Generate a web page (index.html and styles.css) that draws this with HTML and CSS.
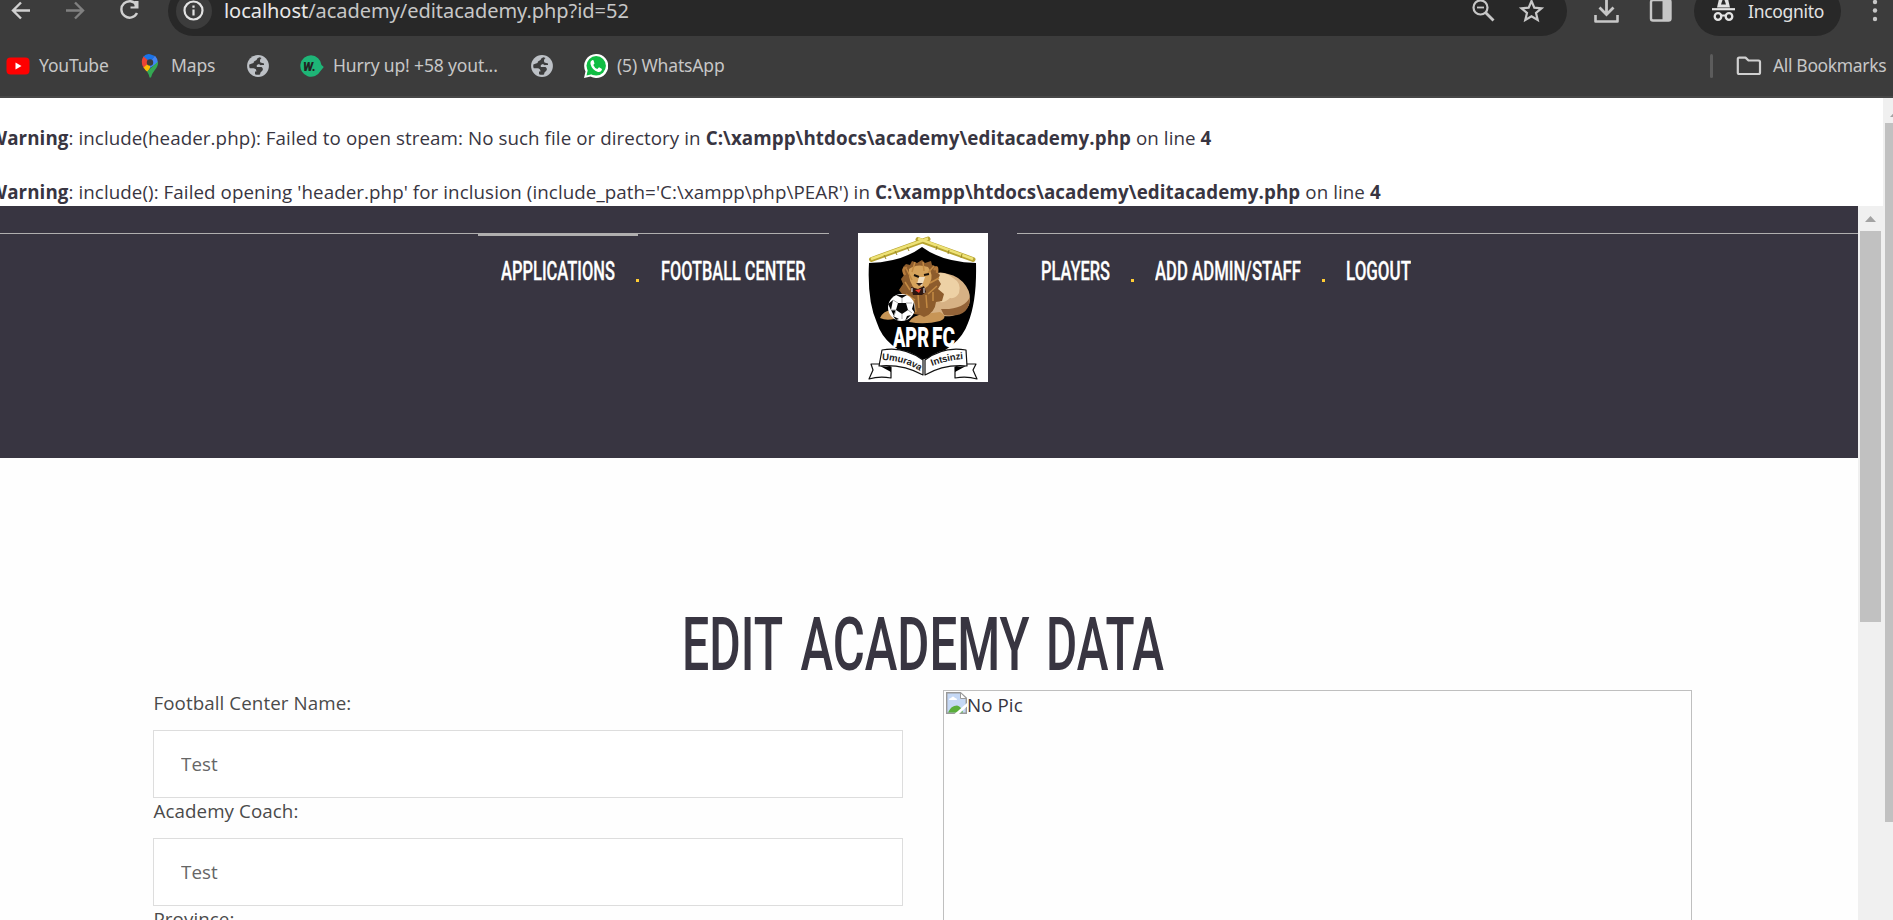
FILE: index.html
```
<!DOCTYPE html>
<html lang="en">
<head>
<meta charset="utf-8">
<title>Edit Academy</title>
<link rel="stylesheet" href="styles.css">
</head>
<body>
<div class="browser">
  <div class="toolbar">
    <svg class="nav-icons" width="168" height="50" viewBox="0 -14 168 50" fill="none" stroke-width="2.4">
      <path d="M30 10.500H13M21 2.500L13 10.500L21 18.500" stroke="#d0d0d0"/>
      <path d="M66 10.500H83M75 2.500L83 10.500L75 18.500" stroke="#808080"/>
      <path d="M136.500 5A8.200 8.200 0 1 0 137 13" stroke="#d0d0d0"/>
      <path d="M138.500 1V8.500H130.500V6.500H134.500V1Z" fill="#d0d0d0"/>
    </svg>
    <div class="address">
      <svg class="info" width="36" height="36" viewBox="0 0 36 36">
        <circle cx="18" cy="18" r="18" fill="#3c3c3c"/>
        <circle cx="17.500" cy="17.500" r="9" fill="none" stroke="#e3e3e3" stroke-width="2.200"/>
        <path d="M16.400 12.500h2.200v2.200h-2.200zM16.400 16.500h2.200v6h-2.200z" fill="#e3e3e3"/>
      </svg>
      <span class="url"><b>localhost</b>/academy/editacademy.php?id=52</span>
      <svg class="addr-icons" width="76" height="50" viewBox="1470 -14 76 50" fill="none" stroke="#c7c7c7">
        <circle cx="1480.500" cy="7.500" r="7" stroke-width="2.200"/>
        <path d="M1485.500 12.500L1493.500 20.500" stroke-width="2.800"/>
        <path d="M1477 7.500H1484" stroke-width="1.800"/>
        <path d="M1531.500 1L1534.300 7.700L1541.500 8.300L1536 13L1537.700 20L1531.500 16.200L1525.300 20L1527 13L1521.500 8.300L1528.700 7.700Z" stroke-width="2.200"/>
      </svg>
    </div>
    <svg class="action-icons" width="127" height="50" viewBox="1567 -14 127 50" fill="none" stroke="#c7c7c7">
      <path d="M1606.500 -4V14M1599.500 7.500L1606.500 14.500L1613.500 7.500" stroke-width="2.800"/>
      <path d="M1595.500 15V21.500H1617.500V15" stroke-width="2.600" stroke-linejoin="round"/>
      <rect x="1651" y="0" width="19.500" height="20.500" rx="2" stroke-width="2.400"/>
      <path d="M1663 0H1670V20H1663Z" fill="#c7c7c7"/>
    </svg>
    <div class="incognito">
      <svg width="24" height="50" viewBox="1712 -14 24 50" fill="none" stroke="#e3e3e3">
        <path d="M1712 9.200H1735" stroke-width="2.200"/>
        <path d="M1717 7.500L1719 -1H1728L1730 7.500Z" fill="#e3e3e3" stroke="none"/>
        <path d="M1721 4.500L1722.500 0H1724.500L1726 4.500Z" fill="#282828" stroke="none"/>
        <circle cx="1718" cy="16.500" r="3.300" stroke-width="2.300"/>
        <circle cx="1729" cy="16.500" r="3.300" stroke-width="2.300"/>
        <path d="M1721 15.500H1726" stroke-width="2"/>
      </svg>
      <span class="incognito-label">Incognito</span>
    </div>
    <svg class="menu" width="8" height="50" viewBox="0 -14 8 50" fill="#c7c7c7">
      <circle cx="4" cy="2" r="2.200"/><circle cx="4" cy="10.500" r="2.200"/><circle cx="4" cy="19" r="2.200"/>
    </svg>
  </div>

  <div class="bookmarks">
    <svg class="bm-youtube" width="24" height="24" viewBox="0 0 24 24">
      <rect x="0.500" y="3.500" width="23" height="17" rx="4" fill="#f00"/><path d="M9.500 8.500V15.500L15.500 12Z" fill="#fff"/>
    </svg>
    <span class="t-youtube">YouTube</span>
    <svg class="bm-maps" width="18" height="24" viewBox="0 0 18 24">
      <path d="M2 3Q5 -0.500 9 0.200L14 2L9 8Z" fill="#1a73e8"/>
      <path d="M9 8L14 1.800Q17 5 17 9L9 14Z" fill="#4285f4"/>
      <path d="M2.500 2.500L9 8L3 14.500Q0.500 11 0.800 7.500Q1 4.500 2.500 2.500Z" fill="#ea4335"/>
      <path d="M9 8V14L6.500 18Q4 16 2.500 13.500Z" fill="#fbbc04"/>
      <path d="M17 7.500Q17.500 12 13.500 16.500Q11 19.500 10 23.500H8.500Q8 20.500 6 17.500Z" fill="#34a853"/>
      <circle cx="9" cy="8.500" r="3.200" fill="#3c3c3c"/>
    </svg>
    <span class="t-maps">Maps</span>
    <svg class="bm-globe" width="22" height="22" viewBox="0 0 22 22">
      <circle cx="11" cy="11" r="10.900" fill="#bdc1c6"/>
      <path d="M12.500 2.300Q10 3 9.500 5L7 6.500Q7 8.500 5 8.500L2.300 9.500Q2 12 2.800 13.200H6.500Q9.500 13.500 9.500 16.500H8V19.300Q10.500 20.200 13 19.500Q13 17 15 16Q17 14 14.500 12H9.800V10L12 9Q13 10.500 14.500 10H17V8.500L13.500 7.500Q12 5 14.500 3Z" fill="#3c3c3c"/>
    </svg>
    <svg class="bm-w" width="24" height="22" viewBox="0 0 24 22">
      <path d="M11 0.300A10.700 10.700 0 1 0 20.500 16L23.800 12L21.500 10A10.700 10.700 0 0 0 11 0.300Z" fill="#1eb577"/>
      <text x="3" y="15.500" class="w-mark">W.</text>
    </svg>
    <span class="t-hurry">Hurry up! +58 yout...</span>
    <svg class="bm-globe2" width="22" height="22" viewBox="0 0 22 22">
      <circle cx="11" cy="11" r="10.900" fill="#bdc1c6"/>
      <path d="M12.500 2.300Q10 3 9.500 5L7 6.500Q7 8.500 5 8.500L2.300 9.500Q2 12 2.800 13.200H6.500Q9.500 13.500 9.500 16.500H8V19.300Q10.500 20.200 13 19.500Q13 17 15 16Q17 14 14.500 12H9.800V10L12 9Q13 10.500 14.500 10H17V8.500L13.500 7.500Q12 5 14.500 3Z" fill="#3c3c3c"/>
    </svg>
    <svg class="bm-whatsapp" width="24" height="24" viewBox="0 0 24 24">
      <path d="M12 0A12 12 0 1 1 6.500 22.500L0 24L1.500 17.500A12 12 0 0 1 12 0Z" fill="#fff"/>
      <circle cx="12.200" cy="11.800" r="9.700" fill="#10bd43"/><path d="M2.500 21.500L4 15L9 20Z" fill="#10bd43"/>
      <path d="M8.500 6Q6 7 6.500 10Q8 16 14 18Q17.500 18.500 18 15L15 13.300L13.300 15Q10.500 14 9.300 11L10.500 9.500L9.500 6.200Z" fill="#fff"/>
    </svg>
    <span class="t-whatsapp">(5) WhatsApp</span>
    <span class="divider"></span>
    <svg class="bm-folder" width="26" height="20" viewBox="0 0 26 20" fill="none" stroke="#d0d0d0" stroke-width="2.200" stroke-linejoin="round">
      <path d="M1.800 3Q1.800 1.600 3.200 1.600H9.500L12.500 4.500H22.500Q24 4.500 24 6V16.500Q24 18 22.500 18H3.200Q1.800 18 1.800 16.500Z"/>
    </svg>
    <span class="t-all">All Bookmarks</span>
  </div>
</div>

<div class="viewport">
  <div class="page">
    <div class="warnings">
      <br><div class="warn first"><b>Warning</b>: include(header.php): Failed to open stream: No such file or directory in <b>C:\xampp\htdocs\academy\editacademy.php</b> on line <b>4</b></div>
      <br><div class="warn second"><b>Warning</b>: include(): Failed opening 'header.php' for inclusion (include_path='C:\xampp\php\PEAR') in <b>C:\xampp\htdocs\academy\editacademy.php</b> on line <b>4</b></div>
    </div>
    <div class="frame">
      <div class="content">
        <header class="site-header">
          <nav class="menu-left">
            <div class="item active"><svg width="114" height="34"><text x="0" y="25" textLength="114" lengthAdjust="spacingAndGlyphs">APPLICATIONS</text></svg></div>
            <i class="dot dot-a"></i>
            <div class="item"><svg width="145" height="34"><text x="0" y="25" textLength="144.500" lengthAdjust="spacingAndGlyphs">FOOTBALL CENTER</text></svg></div>
          </nav>
          <svg class="crest" width="130" height="149" viewBox="0 0 130 149">
            <rect width="130" height="149" fill="#fff"/>
            <path d="M64 14Q84 29 118 30Q119 68 110 90Q101 116 64 127Q27 116 19 90Q9 68 11 30Q44 29 64 14Z" fill="#000"/>
            <g stroke="#b7a431" stroke-width="5" stroke-linecap="round"><path d="M13.500 26.500L70 6M60 6.500L115 26.500"/></g>
            <g stroke="#eee276" stroke-width="2.500"><path d="M13 26L70 5.500M60 5.500L115 26"/></g>
            <path d="M26 22l2 4M37 18l2 4M49 14l2 4M79 13l-1 4M91 17l-1 4M104 21l-1 4" stroke="#998826"/>
            <path d="M76 41Q82 38 90 41Q101 43 108 53Q114 62 111 72Q107 80 94 83Q83 84 72 81Q60 62 76 41Z" fill="#d6b184"/>
            <path d="M77 41Q87 38 95 45Q104 50 101 60Q98 66 92 65Q87 70 82 69Z" fill="#edd1a5"/>
            <path d="M112 64Q106 77 83 76L86 82Q112 86 112 64Z" fill="#936338"/>
            <path d="M22 85Q25 78 33 77L36 86Q28 88 22 85ZM51 89Q55 82 66 81L82 79Q91 84 82 88Q67 92 51 89Z" fill="#c79556"/>
            <path d="M45 34L48 31L52 32L54 28L59 30L64 27L67 30L73 28L74 32L80 34L78 38L82 42L80 46L83 51L80 56L86 61L84 68L78 69Q77 80 66 84L62 82L56 81L53 74L50 69L43 66L44 61L41 57L45 51L43 46L46 42Z" fill="#8d5c2c"/>
            <path d="M51 36Q59 30 70 34Q76 42 72 50Q69 57 58 57Q50 50 51 36Z" fill="#d6a35b"/>
            <path d="M48 35L54 47M57 29L54 39M65 29L66 38M76 33L70 40M47 49L52 57M81 45L72 50M79 53L70 61M48 61L57 67M60 61L61 75M68 62L69 75M75 59L75 68M55 66L58 79" stroke="#c38a43" stroke-width="1.500"/>
            <path d="M47 42Q43 34 49 35M76 37Q80 31 79 40" fill="none" stroke="#b67b3c" stroke-width="2.500"/>
            <path d="M56 42l5 2M66 42l5 -1" stroke="#17100a" stroke-width="2"/>
            <path d="M61 44L59 51L64 53L67 44" fill="#f0dec0"/><path d="M58 50H65L61 53Z" fill="#38251c"/>
            <path d="M53 54L60 56L66 53L68 59L64 62H55Z" fill="#2b1510"/><path d="M57 57L63 56L61 60Z" fill="#ee3928"/>
            <path d="M54 55v4M66 55v5" stroke="#fff"/>
            <circle cx="43.500" cy="74.500" r="13.500" fill="#fff"/>
            <path d="M40 70H48L50 77L44 81L38 77ZM38 62L49 62L44 65ZM30 71L35 67L33 77ZM56 69L54 76L57 80ZM35 83L41 86L38 87ZM49 83L53 82L47 88Z" fill="#080808"/>
            <path d="M44 65V70M35 67L40 70M54 70L48 70M33 77L38 77L36 83M44 81V86M50 77L54 80" stroke="#aaa"/>
            <text class="crest-name" x="35" y="114" textLength="36" lengthAdjust="spacingAndGlyphs">APR</text>
            <text class="crest-name" x="74" y="114" textLength="23" lengthAdjust="spacingAndGlyphs">FC</text>
            <g fill="#fff" stroke="#111" stroke-width="1.200" stroke-linejoin="round">
              <path d="M23 131H13L15 137L11 146Q21 143 33 145V134Z"/><path d="M107 131H118L115 137L119 146Q109 143 97 145V134Z"/>
              <path d="M24 117Q46 113 65 127V142Q45 131 21 133Z"/><path d="M108 117Q85 113 67 127V142Q86 131 109 133Z"/>
            </g>
            <path d="M22 133L33 139V134ZM108 133L97 139V134Z" fill="#000"/>
            <path id="ribbon-left" d="M24 127Q45 127 64 139" fill="none"/><path id="ribbon-right" d="M74 133Q90 127 106 126" fill="none"/>
            <text class="ribbon"><textPath href="#ribbon-left" textLength="40">Umurava</textPath></text>
            <text class="ribbon"><textPath href="#ribbon-right" textLength="32">Intsinzi</textPath></text>
          </svg>
          <nav class="menu-right">
            <div class="item"><svg width="69" height="34"><text x="0" y="25" textLength="69" lengthAdjust="spacingAndGlyphs">PLAYERS</text></svg></div>
            <i class="dot dot-b"></i>
            <div class="item"><svg width="146" height="34"><text x="0" y="25" textLength="146" lengthAdjust="spacingAndGlyphs">ADD ADMIN/STAFF</text></svg></div>
            <i class="dot dot-b"></i>
            <div class="item"><svg width="65" height="34"><text x="0" y="25" textLength="65" lengthAdjust="spacingAndGlyphs">LOGOUT</text></svg></div>
          </nav>
        </header>
        <main class="editor">
          <svg class="heading" width="484" height="80" role="heading">
            <text x="-1" y="60" textLength="101" lengthAdjust="spacingAndGlyphs">EDIT</text>
            <text x="117.500" y="60" textLength="229" lengthAdjust="spacingAndGlyphs">ACADEMY</text>
            <text x="363" y="60" textLength="118" lengthAdjust="spacingAndGlyphs">DATA</text>
          </svg>
          <div class="columns">
            <form class="fields">
              <label>Football Center Name:</label>
              <input type="text" value="Test">
              <label>Academy Coach:</label>
              <input type="text" value="Test">
              <label>Province:</label>
            </form>
            <div class="photo">
              <svg width="21" height="22" viewBox="0 0 21 22">
                <path d="M0.700 0.700H14.500L20.300 6V21.300H0.700Z" fill="#c5d8f5" stroke="#999" stroke-width="1.400"/>
                <path d="M14.500 0.700V6.500H20.300Z" fill="#fff" stroke="#999"/>
                <path d="M3 8Q3 6 5 6Q7 3 9 6Q11 6 11 8Z" fill="#fff"/>
                <path d="M2 20.500Q5 13.500 11 13.500Q15 14 17 20.500Z" fill="#5aae3b"/>
                <path d="M8.500 22L21 11V14.500L13 22Z" fill="#fff"/>
              </svg><span>No Pic</span>
            </div>
          </div>
        </main>
      </div>
      <div class="scrollbar inner"><i class="arrow"></i><i class="thumb"></i></div>
    </div>
  </div>
  <div class="scrollbar outer"><i class="arrow"></i><i class="thumb"></i></div>
</div>
</body>
</html>
```
FILE: styles.css
```
* { box-sizing: border-box; }
html, body { height: 100%; overflow: hidden; }
body { margin: 0; background: #fefefe; font-family: "Open Sans", "Noto Sans", sans-serif; }
svg { display: block; flex: none; }
.browser { height: 98px; background: #3c3c3c; border-bottom: 2px solid #474747; overflow: hidden; font-family: "Noto Sans", "Open Sans", sans-serif; color: #c7c7c7; }
.browser span { white-space: nowrap; flex: none; }
.toolbar { display: flex; height: 50px; margin-top: -14px; }
.address { width: 1399px; flex: none; display: flex; align-items: center; background: #282828; border-radius: 25px; padding-left: 8px; }
.url { width: 404px; margin-left: 12px; font-size: 20px; letter-spacing: -0.040px; line-height: 28px; color: #c7c7c7; }
.url b { font-weight: 400; color: #e8e8e8; }
.addr-icons { margin-left: 842px; }
.incognito { width: 147px; flex: none; display: flex; align-items: center; background: #282828; border-radius: 25px; padding-left: 18px; color: #e3e3e3; font-size: 17.500px; letter-spacing: -0.300px; }
.incognito-label { margin-left: 12px; }
.menu { margin-left: 30px; }
.bookmarks { display: flex; align-items: center; height: 60px; padding-left: 6px; font-size: 17.500px; letter-spacing: -0.150px; line-height: 26px; }
.bookmarks > span { padding-bottom: 2px; }
.t-youtube { width: 68px; margin-left: 9px; }
.bm-maps { margin-left: 34px; }
.t-maps { width: 43px; margin-left: 12px; }
.bm-globe { margin-left: 33px; }
.bm-w { margin-left: 31px; }
.w-mark { font: italic 900 12px "Roboto", sans-serif; fill: #222; }
.t-hurry { width: 165px; margin-left: 9px; }
.bm-globe2 { margin-left: 33px; }
.bm-whatsapp { margin-left: 31px; }
.t-whatsapp { width: 107px; margin-left: 9px; }
.divider { width: 3px; height: 24px; margin-left: 986px; border-radius: 2px; background: #5c5c5c; }
.bm-folder { margin-left: 23px; }
.t-all { margin-left: 11px; letter-spacing: -0.350px; }

.viewport { display: flex; height: 822px; overflow: hidden; }
.page { width: 1883px; flex: none; background: #fff; }
.warnings { height: 108px; line-height: 27px; font-size: 18.750px; letter-spacing: 0.078px; color: #383541; }
.warn { height: 27px; line-height: 25px; margin-left: -11px; white-space: nowrap; }
.frame { display: flex; height: 714px; overflow: hidden; }
.content { width: 1858px; flex: none; background: #fefefe; }
.site-header { height: 252px; background: #383541; padding-top: 27px; display: flex; }
.menu-left, .menu-right { display: flex; height: 60px; border-top: 1px solid #b0afaf; }
.menu-left { width: 829px; padding-left: 478px; }
.menu-right { width: 841px; flex: none; margin-left: 29px; padding-left: 24px; }
.crest { margin-left: 29px; }
.item { height: 58px; padding-top: 21px; }
.item text { font: 500 25.300px "Roboto", sans-serif; fill: #fff; stroke: #fff; stroke-width: 0.300px; }
.active { width: 160px; padding: 19px 0 0 23px; border-top: 2px solid #b0afaf; }
.dot { width: 3px; height: 3px; flex: none; margin-top: 45px; background: #ffcc33; }
.dot-a { margin: 45px 22px 0 -2px; }
.dot-b { margin: 45px 21px 0 21px; }
.crest-name { font: 900 27px "Roboto", sans-serif; fill: #fff; }
.ribbon { font: 700 9.500px "Liberation Sans", sans-serif; fill: #222; }
.editor { padding: 152px 0 0 153px; }
.heading { margin: 0 0 0 530px; }
.heading text { font: 500 74px "Roboto", sans-serif; fill: #383541; }
.columns { display: flex; gap: 40px; }
.fields { width: 750px; font-size: 18.750px; line-height: 25px; letter-spacing: 0.080px; color: #4a4a4a; }
.fields label { display: block; height: 27px; padding-left: 0.500px; }
.fields input { display: block; width: 750px; height: 68px; margin: 13px 0 0; padding: 0 27px 2px; border: 1px solid #ddd; background: #fff; font: 18.750px "Open Sans", sans-serif; letter-spacing: 0.100px; color: #666; }
.photo { width: 749px; height: 400px; border: 1px solid #bfbfbf; padding: 1px 2px; display: flex; font-size: 18.750px; line-height: 25px; letter-spacing: 0.080px; color: #383541; }
.scrollbar { flex: none; background: #f0f0f0; overflow: hidden; }
.scrollbar i { display: block; }
.inner { width: 25px; padding: 10px 2px 0; }
.outer { width: 10px; padding: 13px 0 0 2px; }
.arrow { width: 11px; height: 6px; background: #a3a3a3; clip-path: polygon(50% 0, 100% 100%, 0 100%); }
.inner .arrow { margin: 0 5px 9px; }
.outer .arrow { margin: 0 0 6px 5px; }
.thumb { width: 21px; background: #c1c1c1; }
.inner .thumb { height: 391px; }
.outer .thumb { height: 699px; }
```
